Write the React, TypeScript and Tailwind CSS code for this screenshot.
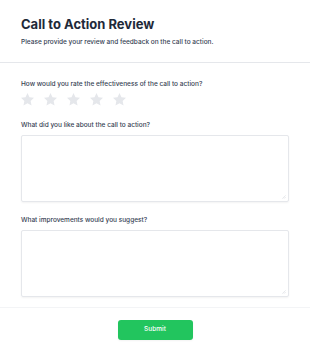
import React, { useState } from 'react';

function Star({ filled }: { filled: boolean }) {
  return (
    <svg viewBox="2.5 2.5 19 18.2" className="w-[13px] h-[12.5px]" fill={filled ? '#facc15' : '#e5e7eb'}>
      <path d="M12 2.5l2.9 6.1 6.6.8-4.9 4.6 1.3 6.6L12 17.3l-5.9 3.3 1.3-6.6-4.9-4.6 6.6-.8z" />
    </svg>
  );
}

function Field({ label, className }: { label: string; className: string }) {
  return (
    <div className={className}>
      <label className="block text-[6.5px] leading-[9px] font-medium text-gray-700">{label}</label>
      <div className="relative mt-[5px]">
        <textarea className="block w-full h-[67px] border border-gray-200 rounded-[2px] shadow-xs outline-none resize-none" />
        <svg viewBox="0 0 6 6" className="absolute right-[3px] bottom-[3px] w-[4px] h-[4px]" stroke="#d1d5db" strokeWidth="0.8">
          <path d="M5.5 0.5L0.5 5.5M5.5 3L3 5.5" />
        </svg>
      </div>
    </div>
  );
}

export default function App() {
  const [rating, setRating] = useState(0);

  return (
    <div className="min-h-screen bg-white text-gray-800 font-['Inter',sans-serif]">
      {/* header */}
      <div className="px-[21px] pt-[16px] pb-[16px] border-b border-gray-200">
        <h1 className="text-[13px] leading-[17px] font-bold text-gray-800">Call to Action Review</h1>
        <p className="text-[6.5px] leading-[8px] font-medium text-gray-700 mt-[5px]">
          Please provide your review and feedback on the call to action.
        </p>
      </div>

      {/* body */}
      <div className="px-[21px] pt-[17px] pb-[10px]">
        <label className="block text-[6.5px] leading-[9px] font-medium text-gray-700">
          How would you rate the effectiveness of the call to action?
        </label>
        <div className="flex gap-[10px] mt-[4px]">
          {[1, 2, 3, 4, 5].map((n) => (
            <button key={n} onClick={() => setRating(n)}>
              <Star filled={n <= rating} />
            </button>
          ))}
        </div>

        <Field label="What did you like about the call to action?" className="mt-[15px]" />
        <Field label="What improvements would you suggest?" className="mt-[14px]" />
      </div>

      {/* footer */}
      <div className="border-t border-gray-100 flex justify-center pt-[12px] pb-[16px]">
        <button className="w-[75px] h-[20px] rounded-[3px] bg-[#22c55e] text-white text-[6.5px] font-medium shadow-xs">
          Submit
        </button>
      </div>
    </div>
  );
}
